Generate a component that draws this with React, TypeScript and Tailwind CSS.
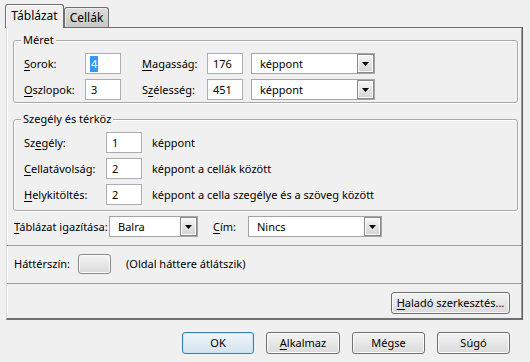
import type { ReactNode } from "react";

function U({ children }: { children: ReactNode }) {
  return <span className="underline underline-offset-[2px]">{children}</span>;
}

function TextBox({ value, selected }: { value: string; selected?: boolean }) {
  return (
    <div className="flex h-[21px] w-[36px] items-center border border-[#abadb3] bg-white pl-[4px]">
      {selected ? <span className="bg-[#3399ff] px-px text-white">{value}</span> : <span className="px-px">{value}</span>}
    </div>
  );
}

function Combo({ value, width }: { value: string; width: string }) {
  return (
    <div className={`flex h-[21px] ${width} items-stretch border border-[#a5a5a5] bg-white`}>
      <span className="flex flex-1 items-center pl-[8px]">{value}</span>
      <span className="flex w-[17px] items-center justify-center border border-[#8a8a8a] bg-linear-to-b from-[#f6f6f6] to-[#d4d4d4] shadow-[inset_0_0_0_1px_#fbfbfb]">
        <svg width="7" height="4" viewBox="0 0 7 4">
          <path d="M0 0h7L3.5 4z" fill="#000" />
        </svg>
      </span>
    </div>
  );
}

function Btn({ children, width, primary }: { children: ReactNode; width: string; primary?: boolean }) {
  return (
    <div
      className={`flex h-[22px] ${width} items-center justify-center rounded-[3px] border ${
        primary
          ? "border-[#3c7fb1] bg-linear-to-b from-[#eef5fb] to-[#d5e3ee] shadow-[inset_0_0_0_1px_#c4e5f6]"
          : "border-[#707070] bg-linear-to-b from-[#f4f4f4] to-[#dadada] shadow-[inset_0_0_0_1px_#fbfbfb]"
      }`}
    >
      {children}
    </div>
  );
}

function Group({ title, children, className }: { title: string; children: ReactNode; className: string }) {
  return (
    <div className={`relative rounded-[3px] border border-[#a9a9a9] shadow-[1px_1px_0_#ffffff,inset_1px_1px_0_#ffffff] ${className}`}>
      <span className="absolute -top-[9px] left-[7px] bg-[#f0f0f0] px-[2px] leading-[16px]">{title}</span>
      {children}
    </div>
  );
}

export default function App() {
  return (
    <div className="h-[362px] w-[530px] overflow-hidden whitespace-nowrap bg-[#f0f0f0] font-['Noto_Sans',sans-serif] text-[11px] leading-[16px] text-black">
      {/* tabs */}
      <div className="flex h-[27px] items-end pl-[5px] pt-[4px]">
        <div className="relative z-10 -mb-px flex h-[24px] w-[59px] items-center justify-center rounded-t-[3px] border border-b-0 border-[#6e6e6e] bg-[#f0f0f0] pb-[2px] text-[12px] shadow-[inset_1px_1px_0_#ffffff]">
          Táblázat
        </div>
        <div className="flex h-[20px] w-[45px] items-center justify-center rounded-t-[3px] border border-b-0 border-[#6e6e6e] bg-linear-to-b from-[#dedede] to-[#c8c8c8] text-[12px] shadow-[inset_1px_1px_0_#ececec]">
          Cellák
        </div>
      </div>

      {/* panel */}
      <div className="ml-[6px] w-[517px] border-t border-r border-b-2 border-l border-t-[#6e6e6e] border-r-[#5a5a5a] border-b-[#6e6e6e] border-l-[#dcdcdc] pr-[4px] pb-[4px] pl-[6px] shadow-[inset_1px_0_0_#ffffff,inset_-1px_0_0_#a0a0a0]">
        <Group title="Méret" className="mt-[12px] pt-[12px] pb-[2px] pl-[10px]">
          <div className="flex flex-col gap-[5px]">
            <div className="flex h-[21px] items-center">
              <span className="w-[61px]">
                <U>S</U>orok:
              </span>
              <TextBox value="4" selected />
              <span className="ml-[21px] w-[65px]">
                <U>M</U>agasság:
              </span>
              <TextBox value="176" />
              <div className="ml-[8px]">
                <Combo value="képpont" width="w-[124px]" />
              </div>
            </div>
            <div className="flex h-[21px] items-center">
              <span className="w-[61px]">
                <U>O</U>szlopok:
              </span>
              <TextBox value="3" />
              <span className="ml-[21px] w-[65px]">
                S<U>z</U>élesség:
              </span>
              <TextBox value="451" />
              <div className="ml-[8px]">
                <Combo value="képpont" width="w-[124px]" />
              </div>
            </div>
          </div>
        </Group>

        <Group title="Szegély és térköz" className="mt-[16px] pt-[12px] pb-[5px] pl-[10px]">
          <div className="flex flex-col gap-[5px]">
            <div className="flex h-[21px] items-center">
              <span className="w-[82px]">
                Sz<U>e</U>gély:
              </span>
              <TextBox value="1" />
              <span className="ml-[10px]">képpont</span>
            </div>
            <div className="flex h-[21px] items-center">
              <span className="w-[82px]">
                <U>C</U>ellatávolság:
              </span>
              <TextBox value="2" />
              <span className="ml-[10px]">képpont a cellák között</span>
            </div>
            <div className="flex h-[21px] items-center">
              <span className="w-[82px]">
                <U>H</U>elykitöltés:
              </span>
              <TextBox value="2" />
              <span className="ml-[10px]">képpont a cella szegélye és a szöveg között</span>
            </div>
          </div>
        </Group>

        <div className="mt-[5px] flex h-[21px] items-center pl-px">
          <span className="w-[95px]">
            <U>T</U>áblázat igazítása:
          </span>
          <Combo value="Balra" width="w-[89px]" />
          <span className="ml-[15px] w-[35px]">
            <U>C</U>ím:
          </span>
          <Combo value="Nincs" width="w-[134px]" />
        </div>

        <div className="-mr-[4px] -ml-[6px] mt-[8px] h-px bg-[#a0a0a0]" />

        <div className="mt-[8px] flex h-[20px] items-center pl-px">
          <span className="w-[64px]">Háttérszín:</span>
          <div className="h-[20px] w-[33px] rounded-[3px] border border-[#8a8a8a] bg-linear-to-b from-[#f4f4f4] to-[#dadada] shadow-[inset_0_0_0_1px_#fbfbfb]" />
          <span className="ml-[15px]">(Oldal háttere átlátszik)</span>
        </div>

        <div className="-mr-[4px] -ml-[6px] mt-[9px] h-px bg-[#a0a0a0]" />

        <div className="mt-[8px] flex justify-end pr-[8px]">
          <Btn width="w-[119px]">
            <span>
              <U>H</U>aladó szerkesztés...
            </span>
          </Btn>
        </div>
      </div>

      {/* dialog buttons */}
      <div className="mt-[12px] flex justify-end gap-[12px] pr-[20px]">
        <Btn width="w-[72px]" primary>
          OK
        </Btn>
        <Btn width="w-[74px]">
          <span>
            <U>A</U>lkalmaz
          </span>
        </Btn>
        <Btn width="w-[73px]">Mégse</Btn>
        <Btn width="w-[73px]">Súgó</Btn>
      </div>
    </div>
  );
}
